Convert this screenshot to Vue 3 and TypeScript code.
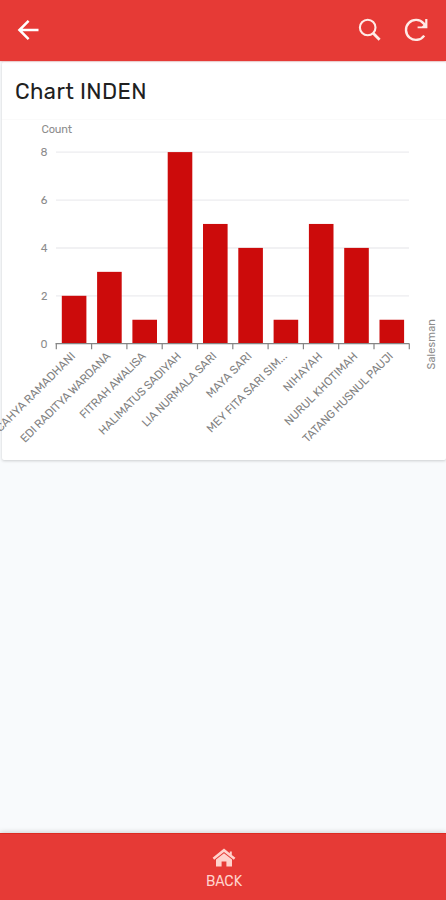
<script setup lang="ts">
interface Entry {
  name: string
  count: number
  length: number
}

const entries: Entry[] = [
  { name: 'CAHYA RAMADHANI', count: 2, length: 107 },
  { name: 'EDI RADITYA WARDANA', count: 3, length: 122 },
  { name: 'FITRAH AWALISA', count: 1, length: 88 },
  { name: 'HALIMATUS SADIYAH', count: 8, length: 111 },
  { name: 'LIA NURMALA SARI', count: 5, length: 100 },
  { name: 'MAYA SARI', count: 4, length: 59 },
  { name: 'MEY FITA SARI SIM...', count: 1, length: 108 },
  { name: 'NIHAYAH', count: 5, length: 50 },
  { name: 'NURUL KHOTIMAH', count: 4, length: 98 },
  { name: 'TATANG HUSNUL PAUJI', count: 1, length: 122 },
]

const left = 56
const right = 409
const base = 223.7
const unit = 23.95
const step = (right - left) / entries.length
const barWidth = 24.6
const levels = [0, 2, 4, 6, 8]

const yOf = (value: number): number => base - value * unit
const xOf = (index: number): number => left + index * step
</script>

<template>
  <div class="screen">
    <header class="topbar">
      <svg class="back" viewBox="0 0 22 22" width="22" height="22">
        <path d="M21.5 11H2.5M11.6 1.8L2.4 11l9.2 9.2" />
      </svg>
      <div class="actions">
        <svg viewBox="0 0 24 24" width="24" height="24">
          <circle cx="9.7" cy="9.5" r="7.8" />
          <path d="M15.2 15.2l6.4 6.6" class="handle" />
        </svg>
        <svg viewBox="0 0 26 26" width="26" height="26">
          <path d="M21.2 18.6A10 10 0 1 1 20.6 6.4L22 8" class="reload" />
          <path d="M24.4 2v9.2H14.6V9.6h4.2l3.4-3.2V2z" class="solid" />
        </svg>
      </div>
    </header>

    <main class="content">
      <section class="card">
        <h1 class="title">Chart INDEN</h1>
        <svg class="chart" viewBox="0 0 446 340" width="446" height="340">
          <text x="41.5" y="12.7" class="label" textLength="30.5">Count</text>
          <line
            v-for="level in levels.slice(1)"
            :key="'g' + level"
            :x1="left"
            :x2="right"
            :y1="yOf(level) + 0.1"
            :y2="yOf(level) + 0.1"
            class="grid"
          />
          <text v-for="level in levels" :key="'l' + level" x="47.5" :y="yOf(level) + 3.8" class="label end">
            {{ level }}
          </text>
          <rect
            v-for="(entry, i) in entries"
            :key="entry.name"
            :x="xOf(i) + 5.8"
            :y="yOf(entry.count)"
            :width="barWidth"
            :height="entry.count * unit"
            class="bar"
          />
          <path :d="`M${left - 0.5} ${base}H${right + 0.5}`" class="axis" />
          <path
            v-for="n in entries.length + 1"
            :key="'t' + n"
            :d="`M${xOf(n - 1) + 0.3} ${base}v5.5`"
            class="axis"
          />
          <text
            v-for="(entry, i) in entries"
            :key="'n' + entry.name"
            :transform="`translate(${xOf(i) + 19.9} ${base + 13.2}) rotate(-45)`"
            :textLength="entry.length"
            class="name end"
          >{{ entry.name }}</text>
          <text transform="translate(434.5 249.5) rotate(-90)" class="label" textLength="50.5">Salesman</text>
        </svg>
      </section>
    </main>

    <footer class="bottombar">
      <svg viewBox="0 0 24 20" width="24" height="20">
        <path d="M4 11.6L12 5.2l8 6.4V18.6h-5.6v-5h-4.8v5H4z" />
        <path d="M12 .6L.6 9.8l1.6 1.9L12 3.9l9.8 7.8 1.6-1.9-3.6-2.9V3.4h-2v1.9z" />
      </svg>
      <span class="caption">BACK</span>
    </footer>
  </div>
</template>

<style>
body {
  margin: 0;
}
</style>

<style scoped>
.screen {
  display: flex;
  flex-direction: column;
  height: 900px;
  overflow: hidden;
  background: #f8fafc;
  font-family: Rubik, Roboto, sans-serif;
}

.topbar {
  box-sizing: border-box;
  height: 61px;
  flex: none;
  display: flex;
  align-items: center;
  justify-content: space-between;
  padding: 0 17px 2px;
  background: #e63a36;
  box-shadow: 0 0 2px rgba(200, 50, 45, 0.6);
  z-index: 1;
}

.topbar svg {
  fill: none;
  stroke: #ffebe7;
  stroke-width: 2.1;
}

.topbar .back {
  stroke: #fff;
  stroke-width: 2.5;
}

.topbar .handle {
  stroke-width: 2.8;
}

.topbar .reload {
  stroke-width: 2.4;
}

.topbar .solid {
  fill: #ffebe7;
  stroke: none;
}

.actions {
  display: flex;
  align-items: center;
  gap: 21px;
}

.content {
  flex: 1;
  min-height: 0;
}

.card {
  box-sizing: border-box;
  height: 398px;
  margin: 1px 0 0 2px;
  background: #fff;
  border-radius: 2px;
  box-shadow: 0 1px 3px rgba(0, 0, 0, 0.18);
}

.title {
  box-sizing: border-box;
  height: 58px;
  margin: 0;
  padding-left: 13px;
  border-bottom: 1px solid #fafafa;
  font-size: 22px;
  line-height: 59px;
  font-weight: 400;
  letter-spacing: 0.4px;
  color: #202020;
}

.chart {
  display: block;
  margin-left: -2px;
}

.label,
.name {
  font-size: 11px;
  fill: #8c8c8c;
}

.name {
  font-size: 11.5px;
  fill: #828282;
}

.end {
  text-anchor: end;
}

.grid {
  stroke: #ececef;
  stroke-width: 1.3;
}

.bar {
  fill: #cc0b0b;
}

.axis {
  stroke: #858585;
  stroke-width: 1.2;
  fill: none;
}

.bottombar {
  box-sizing: border-box;
  height: 67px;
  flex: none;
  display: flex;
  flex-direction: column;
  align-items: center;
  padding: 14px 0 0 2px;
  background: #e63a36;
  border-top: 1px solid #dc2b22;
  box-shadow: 0 -1px 5px rgba(0, 0, 0, 0.16);
}

.bottombar svg {
  fill: #ffd2cc;
}

.caption {
  margin-top: 5px;
  font-size: 14px;
  line-height: 17px;
  color: #ffd2cc;
}
</style>
